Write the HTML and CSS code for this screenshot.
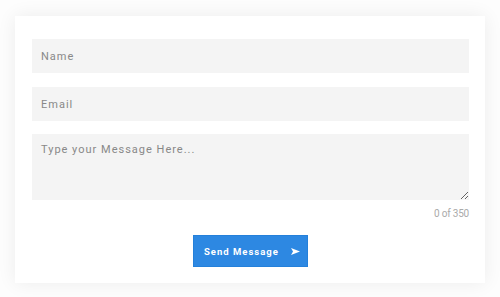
FILE: index.html
```html
<!DOCTYPE html>
<html lang="en">
<head>
    <meta charset="UTF-8">
    <meta name="viewport" content="width=device-width, initial-scale=1.0">
    <title>Contact Form</title>
    <link rel="stylesheet" href="styles.css">
</head>
<body>
    <form class="card">
        <input type="text" class="field" placeholder="Name">
        <input type="text" class="field" placeholder="Email">
        <textarea class="field message" placeholder="Type your Message Here..."></textarea>
        <div class="counter">0 of 350</div>
        <div class="actions">
            <button type="button" class="send">
                Send Message
                <svg class="arrow" width="9" height="7" viewBox="0 0 9 7">
                    <path d="M0 0 L9 3.5 L0 7 L2 3.5 Z" fill="#fff"/>
                </svg>
            </button>
        </div>
    </form>
</body>
</html>
```

FILE: styles.css
```css
body {
    margin: 0;
    padding: 16px 15px;
    background-color: #fdfdfd;
    font-family: Roboto, "Liberation Sans", Arial, sans-serif;
}

.card {
    display: flex;
    flex-direction: column;
    gap: 14px;
    padding: 23px 16px 16px 17px;
    background: #ffffff;
    box-shadow: 0 0 18px rgba(0, 0, 0, 0.07);
}

.field {
    box-sizing: border-box;
    width: 100%;
    height: 34px;
    padding: 0 9px;
    border: none;
    outline: none;
    background-color: #f4f4f4;
    font-family: inherit;
    font-size: 11px;
    letter-spacing: 1px;
    color: #555;
}

.field::placeholder {
    color: #888;
}

.message {
    height: 66px;
    padding-top: 9px;
    resize: vertical;
    margin-top: -1px;
}

.counter {
    margin-top: -6px;
    text-align: right;
    font-size: 10px;
    letter-spacing: -0.2px;
    color: #aaa;
}

.actions {
    display: flex;
    justify-content: center;
    margin-top: 2px;
}

.send {
    display: flex;
    align-items: center;
    gap: 12px;
    box-sizing: border-box;
    width: 115px;
    height: 32px;
    padding: 0 0 0 10px;
    border: 1px solid #2480da;
    background-color: #2d88e2;
    color: #ffffff;
    font-family: inherit;
    font-size: 9.5px;
    font-weight: bold;
    letter-spacing: 1px;
    cursor: pointer;
}

.arrow {
    display: block;
}
```
